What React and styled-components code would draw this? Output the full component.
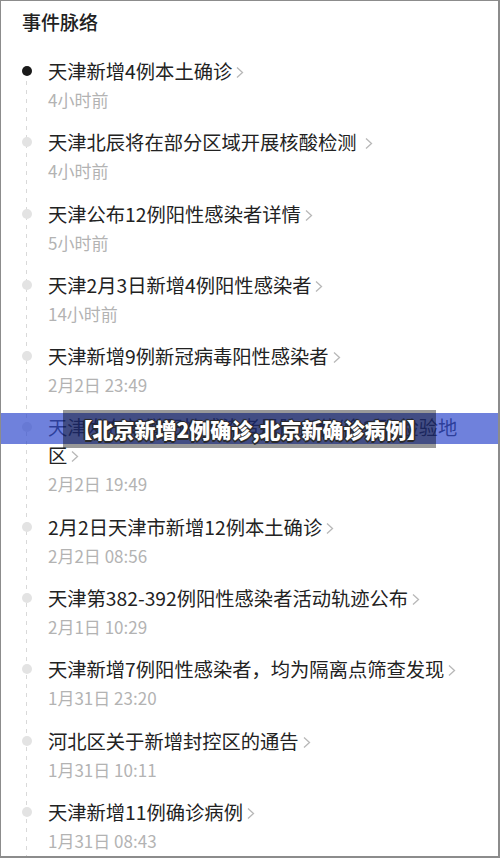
import React from "react";
import styled, { createGlobalStyle } from "styled-components";

// Timeline data
const events = [
  { title: "天津新增4例本土确诊", time: "4小时前", active: true },
  { title: "天津北辰将在部分区域开展核酸检测 ", time: "4小时前" },
  { title: "天津公布12例阳性感染者详情", time: "5小时前" },
  { title: "天津2月3日新增4例阳性感染者", time: "14小时前" },
  { title: "天津新增9例新冠病毒阳性感染者", time: "2月2日 23:49" },
  { title: "天津发布新增阳性感染者风险点位(含2例)检验地区", time: "2月2日 19:49" },
  { title: "2月2日天津市新增12例本土确诊", time: "2月2日 08:56" },
  { title: "天津第382-392例阳性感染者活动轨迹公布", time: "2月1日 10:29" },
  { title: "天津新增7例阳性感染者，均为隔离点筛查发现", time: "1月31日 23:20" },
  { title: "河北区关于新增封控区的通告", time: "1月31日 10:11" },
  { title: "天津新增11例确诊病例", time: "1月31日 08:43" },
];

const GlobalStyle = createGlobalStyle`
  html, body {
    margin: 0;
    padding: 0;
    background: #fff;
  }
  body {
    font-family: "Noto Sans CJK SC", "Noto Sans", sans-serif;
  }
`;

const Page = styled.div`
  position: relative;
  box-sizing: border-box;
  width: 500px;
  height: 858px;
  overflow: hidden;
  background: #fff;
  border-style: solid;
  border-color: #8c8c8c;
  border-width: 1px 2px 2px 1px;
  padding: 7px 0 0 21px;
`;

const Header = styled.h2`
  margin: 0;
  font-size: 19px;
  line-height: 28px;
  font-weight: 500;
  color: #222;
`;

const List = styled.ul`
  position: relative;
  list-style: none;
  margin: 21px 0 0;
  padding: 0 0 0 26px;
  width: 424px;

  &::before {
    content: "";
    position: absolute;
    left: 4px;
    top: 24px;
    bottom: -400px;
    width: 1px;
    background-image: linear-gradient(#d9d9d9 50%, transparent 50%);
    background-size: 1px 9px;
  }
`;

const Item = styled.li`
  position: relative;
  padding-bottom: 17.3px;

  &::before {
    content: "";
    position: absolute;
    left: -26px;
    top: 9px;
    width: 10px;
    height: 10px;
    border-radius: 50%;
    background: ${({ $active }) => ($active ? "#1a1a1a" : "#e3e3e3")};
  }
`;

const Title = styled.div`
  font-size: 19.3px;
  line-height: 28px;
  color: #222;
`;

const Time = styled.div`
  margin-top: 4px;
  font-size: 17px;
  line-height: 22px;
  color: #b3b3b3;
`;

const Chevron = styled.svg`
  display: inline-block;
  width: 10px;
  height: 15px;
  margin-left: 3px;
  vertical-align: -1px;
`;

const Stripe = styled.div`
  position: absolute;
  left: 0;
  right: 0;
  top: 412px;
  height: 31px;
  background: rgba(50, 75, 205, 0.7);
`;

const Caption = styled.div`
  position: absolute;
  left: 62px;
  top: 409px;
  width: 373px;
  height: 38px;
  background: rgba(0, 0, 0, 0.4);
  display: flex;
  align-items: center;
  justify-content: center;
  color: #fff;
  font-size: 21px;
  font-weight: 900;
  white-space: nowrap;
  text-shadow: 1.5px 0 0 #2a2a2a, -1.5px 0 0 #2a2a2a, 0 1.5px 0 #2a2a2a,
    0 -1.5px 0 #2a2a2a, 1px 1px 1px #2a2a2a, -1px -1px 1px #2a2a2a;
`;

const Arrow = () => (
  <Chevron viewBox="0 0 10 15">
    <path d="M2 2.5 L7.5 7.5 L2 12.5" fill="none" stroke="#b8b8b8" strokeWidth="1.3" />
  </Chevron>
);

export default function App() {
  return (
    <Page>
      <GlobalStyle />
      <Header>事件脉络</Header>
      <List>
        {events.map((ev, i) => (
          <Item key={i} $active={ev.active}>
            <Title>
              {ev.title}
              <Arrow />
            </Title>
            <Time>{ev.time}</Time>
          </Item>
        ))}
      </List>
      <Stripe />
      <Caption>【北京新增2例确诊,北京新确诊病例】</Caption>
    </Page>
  );
}
